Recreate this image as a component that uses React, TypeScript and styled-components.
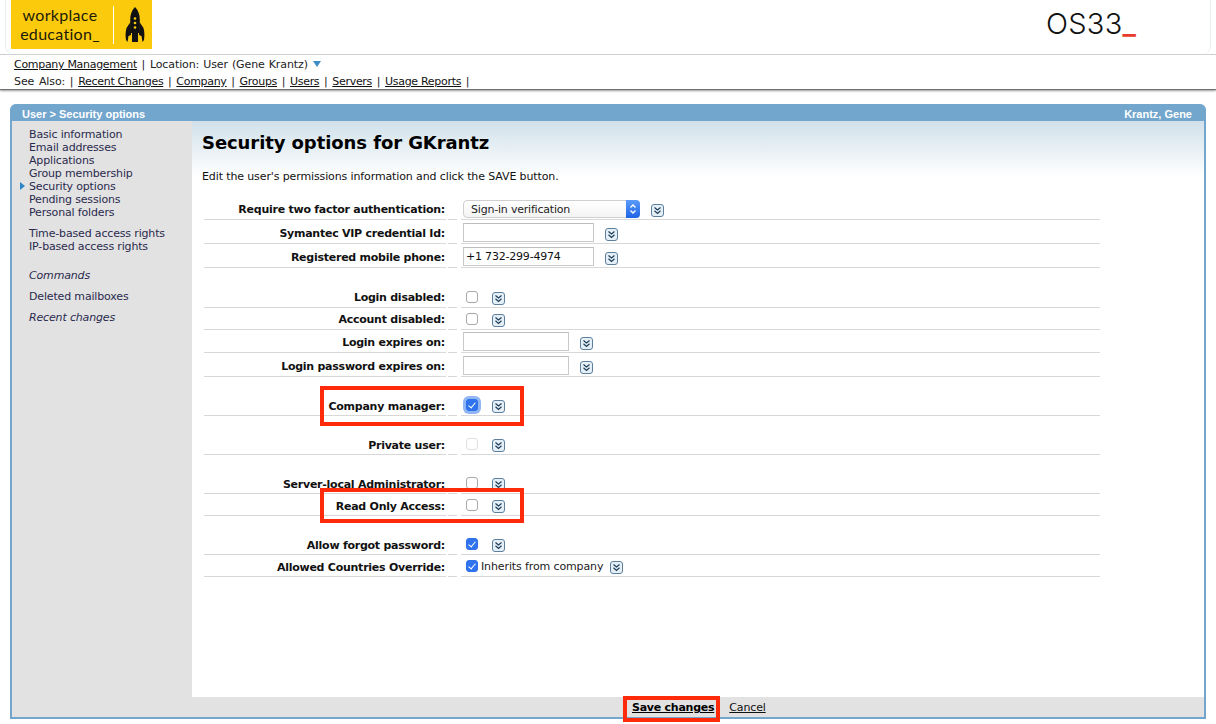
import styled, { createGlobalStyle } from "styled-components"

const GlobalStyle = createGlobalStyle`
    html, body {
        margin: 0;
        padding: 0;
        background: #fff;
        font-family: "DejaVu Sans", Verdana, sans-serif;
        font-size: 11px;
        color: #111;
    }

    body {
        min-height: 724px;
    }
`

const sideGroups = [
    { gap: 0, items: ["Basic information", "Email addresses", "Applications", "Group membership", "Security options", "Pending sessions", "Personal folders"] },
    { gap: 8, items: ["Time-based access rights", "IP-based access rights"] },
    { gap: 16, italic: true, items: ["Commands"] },
    { gap: 8, items: ["Deleted mailboxes"] },
    { gap: 8, italic: true, items: ["Recent changes"] },
]

function Chevron() {
    return (
        <ChevronIcon viewBox="0 0 13 13" width="13" height="13">
            <rect x="0.5" y="0.5" width="12" height="12" rx="2.5" fill="#e4eff8" stroke="#5d7f9c" />
            <path d="M3.5 3.5 6.5 6 9.5 3.5M3.5 6.8 6.5 9.5 9.5 6.8" fill="none" stroke="#1f3d58" strokeWidth="1.2" />
        </ChevronIcon>
    )
}

function Rocket() {
    return (
        <svg viewBox="0 0 20 36" width="20" height="36">
            <path d="M10 0C6.5 3.5 5.2 8 5.2 13v13h9.6V13C14.800 8 13.500 3.500 10 0Z" fill="#111" />
            <path d="M5.500 15 1.500 21C.5 24.500.3 28 1 33l1.500 2 1-6 2.500-1ZM14.500 15l4 6c1 3.500 1.200 7 .5 12l-1.500 2-1-6-2.500-1Z" fill="#111" />
            <rect x="7" y="26" width="6" height="9" fill="#111" />
            <circle cx="10" cy="11.500" r="1.300" fill="#fcca0d" />
            <circle cx="10" cy="16" r="1.300" fill="#fcca0d" />
            <circle cx="10" cy="20.500" r="1.300" fill="#fcca0d" />
        </svg>
    )
}

export default function App() {
    return (
        <>
            <GlobalStyle />
            <TopBar>
                <BrandFrame>
                    <Logo>
                        <LogoText>
                            <span>workplace</span>
                            <span>education_</span>
                        </LogoText>
                        <LogoDivider />
                        <Rocket />
                    </Logo>
                    <Os33>OS33<Dash>_</Dash></Os33>
                </BrandFrame>
            </TopBar>
            <NavBar>
                <NavLine>
                    <NavLink>Company Management</NavLink> | <NavPlace>Location: User (Gene Krantz)</NavPlace> <NavCaret />
                </NavLine>
                <NavLine>
                    See Also: | <NavLink>Recent Changes</NavLink> | <NavLink>Company</NavLink> | <NavLink>Groups</NavLink> | <NavLink>Users</NavLink> | <NavLink>Servers</NavLink> | <NavLink>Usage Reports</NavLink> |
                </NavLine>
            </NavBar>

            <Panel>
                <PanelTitle>
                    <span>User &gt; Security options</span>
                    <span>Krantz, Gene</span>
                </PanelTitle>
                <PanelBody>
                    <Sidebar>
                        {sideGroups.map((group) => (
                            <SideGroup key={group.items[0]} $gap={group.gap} $italic={group.italic}>
                                {group.items.map((item) => (
                                    <SideItem key={item} $active={item === "Security options"}>{item}</SideItem>
                                ))}
                            </SideGroup>
                        ))}
                    </Sidebar>
                    <Content>
                        <Heading>Security options for GKrantz</Heading>
                        <Intro>Edit the user's permissions information and click the SAVE button.</Intro>
                        <Form>
                            <Row $h={23}>
                                <Label>Require two factor authentication:</Label><Gutter />
                                <Value>
                                    <SelectBox>
                                        Sign-in verification
                                        <Stepper>
                                            <svg viewBox="0 0 14 18" width="14" height="18">
                                                <path d="M4.500 7.500 7 5 9.500 7.500M4.500 10.500 7 13 9.500 10.500" fill="none" stroke="#fff" strokeWidth="1.300" />
                                            </svg>
                                        </Stepper>
                                    </SelectBox>
                                    <Chevron />
                                </Value>
                            </Row>
                            <Row $h={24}>
                                <Label>Symantec VIP credential Id:</Label><Gutter />
                                <Value><TextInput $w={131} /><Chevron /></Value>
                            </Row>
                            <Row $h={24}>
                                <Label>Registered mobile phone:</Label><Gutter />
                                <Value><TextInput $w={131} defaultValue="+1 732-299-4974" /><Chevron /></Value>
                            </Row>
                            <Row $h={22} $gap={18}>
                                <Label>Login disabled:</Label><Gutter />
                                <Value><Check type="checkbox" /><Chevron /></Value>
                            </Row>
                            <Row $h={22}>
                                <Label>Account disabled:</Label><Gutter />
                                <Value><Check type="checkbox" /><Chevron /></Value>
                            </Row>
                            <Row $h={23}>
                                <Label>Login expires on:</Label><Gutter />
                                <Value><TextInput $w={106} /><Chevron /></Value>
                            </Row>
                            <Row $h={24}>
                                <Label>Login password expires on:</Label><Gutter />
                                <Value><TextInput $w={106} /><Chevron /></Value>
                            </Row>
                            <Row $h={22} $gap={17}>
                                <Label $low>Company manager:</Label><Gutter />
                                <Value><Check type="checkbox" defaultChecked $focused /><Chevron /></Value>
                                <Highlight $top={-8} $height={40} />
                            </Row>
                            <Row $h={22} $gap={17}>
                                <Label $low>Private user:</Label><Gutter />
                                <Value><Check type="checkbox" disabled /><Chevron /></Value>
                            </Row>
                            <Row $h={22} $gap={17}>
                                <Label $low>Server-local Administrator:</Label><Gutter />
                                <Value><Check type="checkbox" /><Chevron /></Value>
                            </Row>
                            <Row $h={22}>
                                <Label $low>Read Only Access:</Label><Gutter />
                                <Value><Check type="checkbox" /><Chevron /></Value>
                                <Highlight $top={-6} $height={35} />
                            </Row>
                            <Row $h={22} $gap={17}>
                                <Label $low>Allow forgot password:</Label><Gutter />
                                <Value><Check type="checkbox" defaultChecked /><Chevron /></Value>
                            </Row>
                            <Row $h={22}>
                                <Label $low>Allowed Countries Override:</Label><Gutter />
                                <Value>
                                    <Check type="checkbox" defaultChecked $tight />
                                    <Inherit>Inherits from company</Inherit>
                                    <Chevron />
                                </Value>
                            </Row>
                        </Form>
                    </Content>
                </PanelBody>
                <Footer>
                    <SaveLink>Save changes</SaveLink>
                    <CancelLink>Cancel</CancelLink>
                </Footer>
            </Panel>
        </>
    )
}

const TopBar = styled.div`
    height: 54px;
    border-bottom: 1px solid #d6d6d6;
    padding: 0 5px;
    box-sizing: content-box;
`

const BrandFrame = styled.div`
    height: 54px;
    box-sizing: border-box;
    border: 1px solid #e6eeee;
    border-top: 0;
    border-bottom: 0;
    border-radius: 0 0 8px 8px;
    padding-left: 5px;
    display: flex;
    align-items: flex-start;
    justify-content: space-between;
`

const Logo = styled.div`
    width: 141px;
    height: 49px;
    background: #fcca0d;
    display: flex;
    align-items: center;
`

const LogoText = styled.div`
    width: 98px;
    margin: -1px 4px 0 0;
    display: flex;
    flex-direction: column;
    align-items: center;
    font-family: Lato, sans-serif;
    font-size: 16px;
    line-height: 19px;
    letter-spacing: 0.3px;
    color: #1c1a08;
`

const LogoDivider = styled.div`
    width: 1px;
    height: 38px;
    background: #fff;
    margin-right: 11px;
`

const Os33 = styled.div`
    margin: 8px 74px 0 0;
    font-family: Inter, "Liberation Sans", Arial, sans-serif;
    font-weight: 300;
    font-size: 29px;
    line-height: 32px;
    letter-spacing: 0.3px;
    color: #111;
`

const Dash = styled.span`
    color: #e8392b;
    font-weight: 500;
    letter-spacing: 0;
`

const NavBar = styled.div`
    height: 35px;
    padding: 1px 0 0 14px;
    box-sizing: border-box;
    border-bottom: 1px solid #6e6e6e;
    box-shadow: 0 1px 2px rgba(0, 0, 0, 0.4);
`

const NavLine = styled.div`
    line-height: 17px;
    color: #222;
    white-space: nowrap;
    letter-spacing: -0.1px;
    word-spacing: 1.3px;
`

const NavLink = styled.a`
    color: #111;
    text-decoration: underline;
    letter-spacing: -0.3px;
    word-spacing: 0;
`

const NavPlace = styled.span`
    word-spacing: 0.6px;
`

const NavCaret = styled.span`
    display: inline-block;
    vertical-align: 1px;
    border-left: 4px solid transparent;
    border-right: 4px solid transparent;
    border-top: 6px solid #3e8cc4;
`

const Panel = styled.div`
    width: 1196px;
    height: 615px;
    margin: 14px 0 0 10px;
    display: flex;
    flex-direction: column;
    border-left: 2px solid #72a6cd;
    border-right: 2px solid #72a6cd;
    border-bottom: 2px solid #72a6cd;
    box-sizing: border-box;
    border-radius: 7px 7px 0 0;
`

const PanelTitle = styled.div`
    height: 17px;
    margin: 0 -2px;
    padding: 3px 14px 0 12px;
    background: #72a6cd;
    border-radius: 6px 6px 0 0;
    display: flex;
    justify-content: space-between;
    align-items: center;
    color: #fff;
    font-family: "Liberation Sans", Arial, sans-serif;
    font-size: 11px;
    font-weight: bold;
    line-height: 17px;
    flex-shrink: 0;
    box-sizing: border-box;
`

const PanelBody = styled.div`
    flex: 1;
    display: flex;
    min-height: 0;
`

const Sidebar = styled.div`
    width: 180px;
    background: #e2e2e2;
    padding: 7px 0 0 17px;
    box-sizing: border-box;
    flex-shrink: 0;
`

const SideGroup = styled.div<{ $gap: number; $italic?: boolean }>`
    margin-top: ${(props) => props.$gap}px;
    font-style: ${(props) => (props.$italic ? "italic" : "normal")};
`

const SideItem = styled.div<{ $active?: boolean }>`
    position: relative;
    line-height: 13px;
    color: #2a2a4e;
    white-space: nowrap;
    letter-spacing: -0.16px;

    ${(props) => props.$active && `
        &::before {
            content: "";
            position: absolute;
            left: -9px;
            top: 2px;
            border-top: 4px solid transparent;
            border-bottom: 4px solid transparent;
            border-left: 5px solid #2f86c5;
        }
    `}
`

const Content = styled.div`
    flex: 1;
    padding: 10px 0 0 10px;
    background: linear-gradient(#d0e0ea 0, #fff 56px);
`

const Heading = styled.h1`
    margin: 0;
    font-size: 18px;
    line-height: 24px;
    font-weight: bold;
    letter-spacing: -0.08px;
    color: #000;
`

const Intro = styled.p`
    margin: 15px 0 0;
    line-height: 14px;
    letter-spacing: -0.12px;
    color: #111;
`

const Form = styled.div`
    width: 896px;
    margin: 13px 0 0 2px;
`

const Row = styled.div<{ $h: number; $gap?: number }>`
    position: relative;
    display: grid;
    grid-template-columns: 242px 11px 1fr;
    column-gap: 2px;
    height: ${(props) => props.$h}px;
    margin-top: ${(props) => props.$gap || 0}px;
`

const Label = styled.div<{ $low?: boolean }>`
    display: flex;
    align-items: flex-end;
    justify-content: flex-end;
    padding: 0 1px ${(props) => (props.$low ? 2 : 3)}px 0;
    border-bottom: 1px solid #d8d8d8;
    font-weight: bold;
    line-height: 13px;
    letter-spacing: -0.25px;
    color: #111;
    white-space: nowrap;
`

const Gutter = styled.div`
    border-bottom: 1px solid #d8d8d8;
    margin-right: 2px;
`

const Value = styled.div`
    display: flex;
    align-items: flex-end;
    padding: 0 0 1px 2px;
    border-bottom: 1px solid #d8d8d8;
`

const ChevronIcon = styled.svg`
    flex-shrink: 0;
    margin-bottom: 1px;
`

const TextInput = styled.input<{ $w: number }>`
    width: ${(props) => props.$w}px;
    height: 19px;
    box-sizing: border-box;
    margin: 0 11px 0 0;
    padding: 0 2px;
    border: 1px solid #c9c9c9;
    border-top-color: #bdbdbd;
    background: #fff;
    font-family: "DejaVu Sans", Verdana, sans-serif;
    font-size: 11px;
    letter-spacing: -0.2px;
    color: #111;
    outline: none;
`

const SelectBox = styled.div`
    position: relative;
    width: 177px;
    height: 18px;
    box-sizing: border-box;
    margin-right: 11px;
    padding-left: 7px;
    border: 1px solid #cfcfcf;
    border-radius: 4px;
    background: linear-gradient(#fff, #f4f4f4);
    line-height: 17px;
    letter-spacing: -0.2px;
    color: #222;
`

const Stepper = styled.span`
    position: absolute;
    right: -1px;
    top: -1px;
    width: 14px;
    height: 18px;
    border-radius: 0 4px 4px 0;
    background: linear-gradient(#5a9bf8, #1f63e6);
`

const Check = styled.input<{ $focused?: boolean; $tight?: boolean }>`
    appearance: none;
    position: relative;
    width: 12px;
    height: 12px;
    box-sizing: border-box;
    margin: 0 ${(props) => (props.$tight ? 3 : 14)}px 3px 3px;
    border: 1px solid #a9a9a9;
    border-radius: 3px;
    background: #fff;
    flex-shrink: 0;

    &:disabled {
        border-color: #e0e0e0;
    }

    &:checked {
        border-color: #2f6fe8;
        background: #2f74ee;
        box-shadow: ${(props) => (props.$focused ? "0 0 0 3px #8fb5f5" : "none")};
    }

    &:checked::after {
        content: "";
        position: absolute;
        left: 3px;
        top: 1px;
        width: 3px;
        height: 6px;
        border: solid #fff;
        border-width: 0 1.5px 1.5px 0;
        transform: rotate(40deg);
    }
`

const Inherit = styled.span`
    margin: 0 7px 2px 0;
    line-height: 13px;
    letter-spacing: -0.12px;
    color: #222;
    white-space: nowrap;
`

const Highlight = styled.div<{ $top: number; $height: number }>`
    position: absolute;
    left: 116px;
    top: ${(props) => props.$top}px;
    width: 204px;
    height: ${(props) => props.$height}px;
    box-sizing: border-box;
    border: 4px solid #ff2a0a;
    pointer-events: none;
`

const Footer = styled.div`
    height: 20px;
    background: #e2e2e2;
    flex-shrink: 0;
    display: flex;
    align-items: center;
    padding: 2px 0 0 620px;
    box-sizing: border-box;
`

const SaveLink = styled.a`
    position: relative;
    display: block;
    font-weight: bold;
    text-decoration: underline;
    letter-spacing: -0.25px;
    color: #000;
    line-height: 14px;
    margin-right: 15px;

    &::after {
        content: "";
        position: absolute;
        left: -9px;
        right: -6px;
        top: -5px;
        bottom: -7px;
        border: 4px solid #ff2a0a;
    }
`

const CancelLink = styled.a`
    text-decoration: underline;
    letter-spacing: -0.15px;
    color: #111;
    line-height: 14px;
`
